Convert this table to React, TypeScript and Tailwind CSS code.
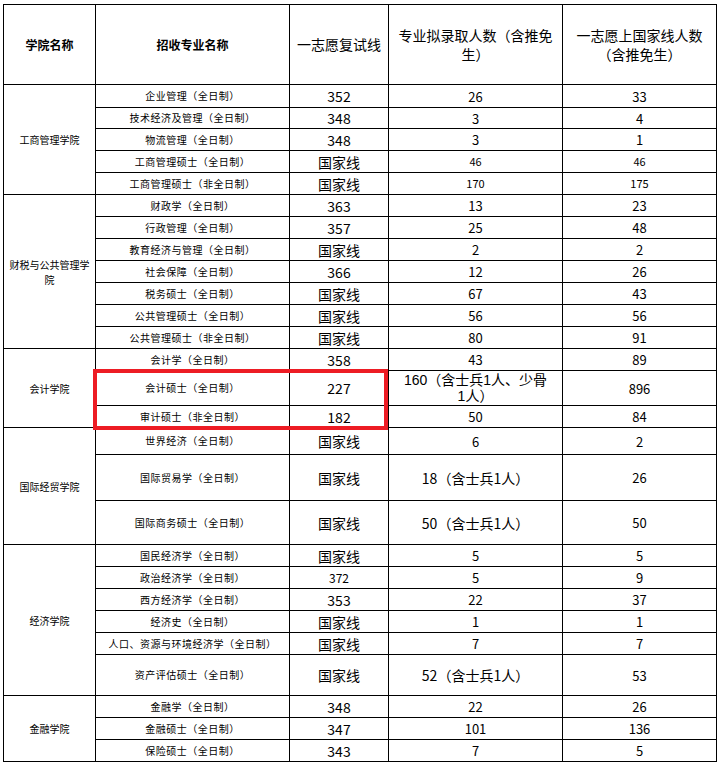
import React from "react";

type Row = {
  major: string;
  line: string;
  plan: React.ReactNode;
  passed: string;
  h: number;
  // font sizes for the numeric columns
  lineSize?: "sm" | "md";
  countSize?: "xs" | "sm";
};

type Group = { college: React.ReactNode; rows: Row[] };

const NATIONAL = "国家线";

const GROUPS: Group[] = [
  {
    college: "工商管理学院",
    rows: [
      { major: "企业管理（全日制）", line: "352", plan: "26", passed: "33", h: 23 },
      { major: "技术经济及管理（全日制）", line: "348", plan: "3", passed: "4", h: 21 },
      { major: "物流管理（全日制）", line: "348", plan: "3", passed: "1", h: 22 },
      { major: "工商管理硕士（全日制）", line: NATIONAL, plan: "46", passed: "46", h: 22, countSize: "xs" },
      { major: "工商管理硕士（非全日制）", line: NATIONAL, plan: "170", passed: "175", h: 22, countSize: "xs" },
    ],
  },
  {
    college: (
      <>
        财税与公共管理学
        <br />院
      </>
    ),
    rows: [
      { major: "财政学（全日制）", line: "363", plan: "13", passed: "23", h: 22 },
      { major: "行政管理（全日制）", line: "357", plan: "25", passed: "48", h: 22 },
      { major: "教育经济与管理（全日制）", line: NATIONAL, plan: "2", passed: "2", h: 22 },
      { major: "社会保障（全日制）", line: "366", plan: "12", passed: "26", h: 22 },
      { major: "税务硕士（全日制）", line: NATIONAL, plan: "67", passed: "43", h: 22 },
      { major: "公共管理硕士（全日制）", line: NATIONAL, plan: "56", passed: "56", h: 22 },
      { major: "公共管理硕士（非全日制）", line: NATIONAL, plan: "80", passed: "91", h: 22 },
    ],
  },
  {
    college: "会计学院",
    rows: [
      { major: "会计学（全日制）", line: "358", plan: "43", passed: "89", h: 22 },
      {
        major: "会计硕士（全日制）",
        line: "227",
        plan: (
          <span
            className="block text-[14px] leading-[16px]"
            style={{ fontFamily: '"Liberation Sans", "Noto Sans CJK SC", sans-serif' }}
          >
            160（含士兵1人、少骨
            <br />
            1人）
          </span>
        ),
        passed: "896",
        h: 35,
      },
      { major: "审计硕士（非全日制）", line: "182", plan: "50", passed: "84", h: 22 },
    ],
  },
  {
    college: "国际经贸学院",
    rows: [
      { major: "世界经济（全日制）", line: NATIONAL, plan: "6", passed: "2", h: 27 },
      { major: "国际贸易学（全日制）", line: NATIONAL, plan: <span className="text-[14px]">18（含士兵1人）</span>, passed: "26", h: 46 },
      { major: "国际商务硕士（全日制）", line: NATIONAL, plan: <span className="text-[14px]">50（含士兵1人）</span>, passed: "50", h: 44 },
    ],
  },
  {
    college: "经济学院",
    rows: [
      { major: "国民经济学（全日制）", line: NATIONAL, plan: "5", passed: "5", h: 22 },
      { major: "政治经济学（全日制）", line: "372", plan: "5", passed: "9", h: 22, lineSize: "sm" },
      { major: "西方经济学（全日制）", line: "353", plan: "22", passed: "37", h: 22 },
      { major: "经济史（全日制）", line: NATIONAL, plan: "1", passed: "1", h: 22 },
      { major: "人口、资源与环境经济学（全日制）", line: NATIONAL, plan: "7", passed: "7", h: 22 },
      { major: "资产评估硕士（全日制）", line: NATIONAL, plan: <span className="text-[14px]">52（含士兵1人）</span>, passed: "53", h: 41 },
    ],
  },
  {
    college: "金融学院",
    rows: [
      { major: "金融学（全日制）", line: "348", plan: "22", passed: "26", h: 22 },
      { major: "金融硕士（全日制）", line: "347", plan: "101", passed: "136", h: 22 },
      { major: "保险硕士（全日制）", line: "343", plan: "7", passed: "5", h: 22 },
    ],
  },
];

const cell = "border border-black p-0 text-center align-middle";

export default function App() {
  return (
    <div
      className="relative h-[762px] w-[719px] bg-white pl-[3px] pt-[4px] text-black"
      style={{ fontFamily: '"Noto Sans CJK SC", "Noto Sans", sans-serif' }}
    >
      <table className="w-[713px] table-fixed border-collapse">
        <colgroup>
          <col className="w-[92px]" />
          <col className="w-[194px]" />
          <col className="w-[99px]" />
          <col className="w-[174px]" />
          <col className="w-[154px]" />
        </colgroup>
        <thead>
          <tr className="h-[80px]">
            <th className={`${cell} text-[12px] font-bold`}>学院名称</th>
            <th className={`${cell} text-[12px] font-bold`}>招收专业名称</th>
            <th className={`${cell} text-[14px] font-normal`}>一志愿复试线</th>
            <th className={`${cell} text-[14px] font-normal leading-[19px]`}>
              专业拟录取人数（含推免
              <br />
              生）
            </th>
            <th className={`${cell} text-[14px] font-normal leading-[19px]`}>
              一志愿上国家线人数
              <br />
              （含推免生）
            </th>
          </tr>
        </thead>
        <tbody>
          {GROUPS.map((group, gi) =>
            group.rows.map((row, ri) => {
              const lineClass =
                row.line === NATIONAL
                  ? "text-[14px]"
                  : row.lineSize === "sm"
                    ? "text-[12px]"
                    : "text-[14px]";
              const countClass =
                row.countSize === "xs" ? "text-[11px]" : "text-[13px]";
              return (
                <tr key={`${gi}-${ri}`} style={{ height: row.h }}>
                  {ri === 0 ? (
                    <td
                      rowSpan={group.rows.length}
                      className={`${cell} text-[10px] leading-[15px]`}
                    >
                      {group.college}
                    </td>
                  ) : null}
                  <td className={`${cell} text-[10px] leading-none tracking-[0.5px]`}>
                    {row.major}
                  </td>
                  <td className={`${cell} ${lineClass} leading-none`}>
                    {row.line}
                  </td>
                  <td className={`${cell} ${countClass} leading-none`}>
                    {row.plan}
                  </td>
                  <td className={`${cell} ${countClass} leading-none`}>
                    {row.passed}
                  </td>
                </tr>
              );
            }),
          )}
        </tbody>
      </table>

      {/* red highlight around 会计硕士 / 审计硕士 */}
      <div className="pointer-events-none absolute left-[93px] top-[369px] h-[61px] w-[295px] border-4 border-[#ed1c24]" />
    </div>
  );
}
